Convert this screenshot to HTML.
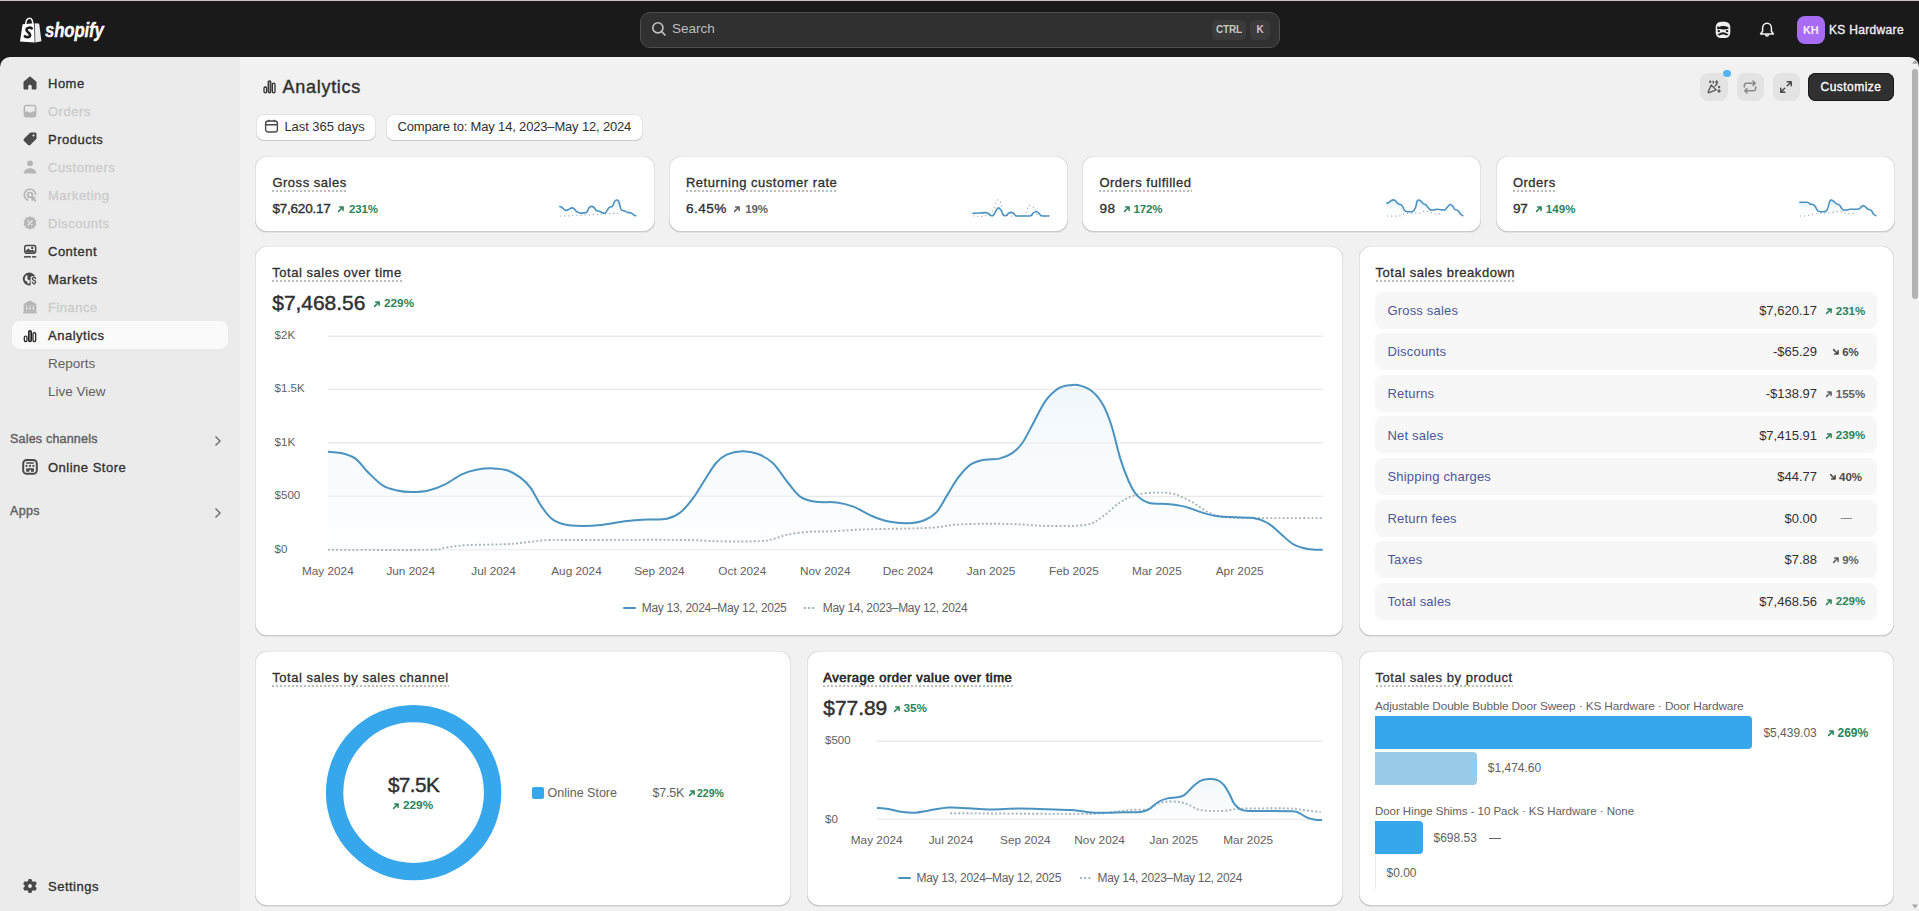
<!DOCTYPE html>
<html><head><meta charset="utf-8">
<style>
*{box-sizing:border-box;margin:0;padding:0}
html,body{width:1919px;height:911px;overflow:hidden;background:#1a1a1a;font-family:"Liberation Sans",sans-serif;color:#303030}
.a{position:absolute}
.t{position:absolute;line-height:1;white-space:nowrap}
.b{font-weight:bold}
#top{left:0;top:0;width:1919px;height:56.6px;background:#1a1a1a;border-top:1px solid #cec3c7}
#side{left:0;top:56.6px;width:240px;height:854.4px;background:#ebebeb;border-top-left-radius:10px}
#main{left:240px;top:56.6px;width:1679px;height:854.4px;background:#f1f1f1;border-top-right-radius:10px}
.card{position:absolute;background:#fff;border-radius:12px;box-shadow:0 1px 0 0 rgba(26,26,26,.07),inset 1px 0 0 rgba(0,0,0,.11),inset -1px 0 0 rgba(0,0,0,.11),inset 0 -1px 0 rgba(0,0,0,.2),inset 0 1px 0 rgba(204,204,204,.4)}
.nav{font-size:13px;font-weight:normal;-webkit-text-stroke:0.32px currentColor;letter-spacing:0.5px;color:#303030}
.sb{font-weight:normal;-webkit-text-stroke:0.32px currentColor;letter-spacing:0.04em}
.dis{color:#cccccc}
.sub{font-size:13.5px;color:#616161}
.ttl{font-size:13px;font-weight:bold;color:#303030;border-bottom:1px dotted #b5b5b5}
.up{color:#29845a;font-weight:bold}
.grey{color:#616161}
</style></head><body>
<div id="top" class="a">
<svg class="a" style="left:18px;top:15px" width="26" height="28" viewBox="0 0 26 28">
<path d="M4.6 8.3 L16.2 7.2 L16.6 26.6 L2 25.6 Z" fill="#fff"/>
<path d="M16.9 7.2 L20.6 7.6 C21 7.7 21.2 8 21.3 8.4 L23.4 25.2 L17.3 26.6 Z" fill="#ececec"/>
<path d="M7.6 8.4 C7.9 5 9.4 2.3 11.6 2.3 C13.4 2.3 14.6 4.3 14.8 7.6" stroke="#fff" stroke-width="1.5" fill="none"/>
<path d="M10.2 6.2 C10.8 5.6 11.6 5.6 12.1 6.1" stroke="#1a1a1a" stroke-width="0.8" fill="none"/>
<path d="M13.6 12.3 C12.6 11.5 9.2 11.2 8.5 13.6 C7.8 16.3 12.6 16.4 12.2 19.4 C11.9 21.4 9 21.6 6.9 20.4" stroke="#1a1a1a" stroke-width="2.7" fill="none" stroke-linecap="round"/>
</svg>
<div class="t" style="left:44.7px;top:18px;font-size:21px;font-weight:bold;font-style:italic;color:#fff;transform:scaleX(0.8);transform-origin:0 0;letter-spacing:-0.2px;-webkit-text-stroke:0.35px #fff">shopify</div>
<div class="a" style="left:640px;top:10.6px;width:640px;height:36.2px;background:#303030;border:1px solid #4d4d4d;border-radius:10px"></div>
<svg class="a" style="left:650px;top:19px" width="18" height="18" viewBox="0 0 18 18"><circle cx="7.9" cy="7.8" r="5.1" stroke="#c4c4c4" stroke-width="1.6" fill="none"/><path d="M11.6 11.5 L15 15" stroke="#c4c4c4" stroke-width="1.7" stroke-linecap="round"/></svg>
<div class="t" style="left:672px;top:21.3px;font-size:13.5px;color:#bdbdbd">Search</div>
<div class="a" style="left:1212px;top:18.5px;width:34px;height:20px;background:#3b3b3b;border-radius:5px"></div>
<div class="t" style="left:1216px;top:23.5px;font-size:10px;font-weight:bold;color:#c8c8c8;letter-spacing:-0.15px">CTRL</div>
<div class="a" style="left:1250px;top:18.5px;width:20px;height:20px;background:#3b3b3b;border-radius:5px"></div>
<div class="t" style="left:1256.5px;top:23.5px;font-size:10px;font-weight:bold;color:#c8c8c8">K</div>
<svg class="a" style="left:1713px;top:19px" width="20" height="20" viewBox="0 0 20 20">
<rect x="2.7" y="1.7" width="14.6" height="16.3" rx="5.2" fill="#f0f0f0"/>
<path d="M4.3 9.2 L4.3 6.9 C4.4 6 5.1 5.7 5.5 6.5 L5.9 7.3 C7 6.2 9 5.8 11 5.9 C13 6 14.8 6.5 15.5 7.6 L15.5 8.8 C14 8.6 12.6 9.7 10.6 9.6 C8.6 9.5 7.1 8.7 5.6 9.3 Z" fill="#1a1a1a"/>
<circle cx="5.8" cy="11.1" r="1.2" fill="#1a1a1a"/><circle cx="14.1" cy="11.1" r="1.2" fill="#1a1a1a"/>
<path d="M4.4 14.6 C6.3 13.7 8 12.3 10 12.3 C12 12.3 13.7 13.7 15.6 14.6 C14.3 15.7 13 15.5 12.3 15 C11.5 14.4 8.5 14.4 7.7 15 C7 15.5 5.7 15.7 4.4 14.6 Z" fill="#1a1a1a"/>
</svg>
<svg class="a" style="left:1757px;top:19px" width="20" height="20" viewBox="0 0 20 20" fill="none" stroke="#f2f2f2" stroke-width="1.5" stroke-linejoin="round">
<path d="M10 3.2 C7.3 3.2 5.6 5.4 5.6 8 L5.6 11.2 L3.6 14 L16.4 14 L14.4 11.2 L14.4 8 C14.4 5.4 12.7 3.2 10 3.2 Z"/>
<path d="M8.6 14.2 C8.6 16.6 11.4 16.6 11.4 14.2"/>
</svg>
<div class="a" style="left:1797px;top:15px;width:28px;height:28px;background:#a86bf3;border-radius:8px"></div>
<div class="t b" style="left:1803px;top:23.5px;font-size:11px;color:#f7ecff;letter-spacing:-0.2px">KH</div>
<div class="t sb" style="left:1829px;top:22.8px;font-size:12px;color:#f3f3f3;letter-spacing:0.32px">KS Hardware</div>
</div>
<div id="side" class="a"></div>
<div id="sidec">
<div class="a" style="left:12px;top:321px;width:216px;height:28px;background:#fafafa;border-radius:8px"></div>
<svg class="a" style="left:20px;top:73px" width="20" height="20" viewBox="0 0 20 20"><path d="M10 3.2 L3.8 8.4 C3.5 8.7 3.5 9 3.5 9.5 L3.5 15.3 C3.5 16.1 4.1 16.5 4.8 16.5 L8.3 16.5 L8.3 13.3 C8.3 12.4 9.1 11.7 10 11.7 C10.9 11.7 11.7 12.4 11.7 13.3 L11.7 16.5 L15.2 16.5 C15.9 16.5 16.5 16.1 16.5 15.3 L16.5 9.5 C16.5 9 16.5 8.7 16.2 8.4 Z" fill="#4a4a4a"/></svg>
<div class="t nav" style="left:48px;top:77.40px">Home</div>
<svg class="a" style="left:20px;top:101px" width="20" height="20" viewBox="0 0 20 20"><rect x="3.6" y="3.7" width="12.8" height="12.8" rx="3" fill="#b5b5b5"/><path d="M5.2 5.3 H14.8 V10.6 H12.3 C11.6 10.6 11.3 11.8 10 11.8 C8.7 11.8 8.4 10.6 7.7 10.6 H5.2 Z" fill="#ebebeb"/></svg>
<div class="t nav dis" style="left:48px;top:105.40px">Orders</div>
<svg class="a" style="left:20px;top:129px" width="20" height="20" viewBox="0 0 20 20"><path d="M11 3.5 L15.2 3.5 C15.9 3.5 16.5 4.1 16.5 4.8 L16.5 9 C16.5 9.5 16.3 9.9 16 10.2 L10.2 16 C9.6 16.6 8.7 16.6 8.1 16 L4 11.9 C3.4 11.3 3.4 10.4 4 9.8 L9.8 4 C10.1 3.7 10.5 3.5 11 3.5 Z" fill="#4a4a4a"/><circle cx="13.5" cy="6.5" r="1.1" fill="#ebebeb"/></svg>
<div class="t nav" style="left:48px;top:133.40px">Products</div>
<svg class="a" style="left:20px;top:157px" width="20" height="20" viewBox="0 0 20 20"><circle cx="10" cy="6.3" r="2.9" fill="#b5b5b5"/><path d="M3.7 16.6 C3.9 13.5 6.5 11.3 10 11.3 C13.5 11.3 16.1 13.5 16.3 16.6 Z" fill="#b5b5b5"/></svg>
<div class="t nav dis" style="left:48px;top:161.40px">Customers</div>
<svg class="a" style="left:20px;top:185px" width="20" height="20" viewBox="0 0 20 20"><path d="M10 3.4 C6.4 3.4 3.5 6.3 3.5 9.9 C3.5 12.8 5.4 15.2 8 16 L8.4 14.3 C6.5 13.6 5.2 11.9 5.2 9.9 C5.2 7.2 7.3 5.1 10 5.1 C12.6 5.1 14.8 7.2 14.8 9.9 L16.5 9.9 C16.5 6.3 13.6 3.4 10 3.4 Z" fill="#b5b5b5"/><circle cx="10" cy="9.9" r="2.4" stroke="#b5b5b5" stroke-width="1.7" fill="none"/><path d="M10.6 10.5 L16.6 12.4 L14.2 13.6 L16.4 15.8 L15.3 16.9 L13.1 14.7 L12 17 Z" fill="#b5b5b5"/></svg>
<div class="t nav dis" style="left:48px;top:189.40px">Marketing</div>
<svg class="a" style="left:20px;top:213px" width="20" height="20" viewBox="0 0 20 20"><path d="M10 3 L11.8 4.4 L14.1 4.2 L14.6 6.4 L16.5 7.6 L15.6 9.8 L16.5 12 L14.6 13.3 L14.1 15.5 L11.8 15.3 L10 16.8 L8.2 15.3 L5.9 15.5 L5.4 13.3 L3.5 12 L4.4 9.8 L3.5 7.6 L5.4 6.4 L5.9 4.2 L8.2 4.4 Z" fill="#b5b5b5"/><path d="M8 12 L12 7.8" stroke="#ebebeb" stroke-width="1.3" stroke-linecap="round"/><circle cx="8.2" cy="8.2" r="0.9" fill="#ebebeb"/><circle cx="11.8" cy="11.6" r="0.9" fill="#ebebeb"/></svg>
<div class="t nav dis" style="left:48px;top:217.40px">Discounts</div>
<svg class="a" style="left:20px;top:241px" width="20" height="20" viewBox="0 0 20 20"><rect x="4" y="3.7" width="12.4" height="9.2" rx="2.4" fill="#4a4a4a"/><rect x="5.5" y="5.2" width="9.4" height="6.2" rx="1.2" fill="#ebebeb"/><path d="M5.5 11.4 L5.5 10 L8.3 7.4 L10.8 9.6 L12.3 8.6 L14.9 10.6 L14.9 11.4 Z" fill="#4a4a4a"/><circle cx="12.2" cy="6.9" r="1.2" fill="#4a4a4a"/><rect x="4" y="15.1" width="6.9" height="1.5" fill="#4a4a4a"/><rect x="12" y="15.1" width="4.2" height="1.5" fill="#4a4a4a"/></svg>
<div class="t nav" style="left:48px;top:245.40px">Content</div>
<svg class="a" style="left:20px;top:269px" width="20" height="20" viewBox="0 0 20 20"><circle cx="9.3" cy="10" r="6.5" fill="#4a4a4a"/><path d="M6.2 6 C7.5 6.5 8 8 7.3 9 C6.8 9.8 8.3 11 9.5 11.2 C10.3 11.3 9.8 13.3 9 14.5 L7.5 15.3 C8 13.8 7.3 12.5 6 12 C4.7 11.5 4.5 9.5 5 8.5 Z" fill="#ebebeb"/><rect x="10.5" y="7" width="7" height="10" rx="2" fill="#ebebeb"/><path d="M15.6 9.6 C15.4 8.8 14.8 8.4 14 8.4 C13 8.4 12.3 9 12.3 9.8 C12.3 11.6 15.8 11 15.8 12.9 C15.8 13.8 15 14.4 14 14.4 C13.1 14.4 12.4 13.9 12.2 13.1 M14 7.6 V8.4 M14 14.4 V15.3" stroke="#4a4a4a" stroke-width="1.3" fill="none" stroke-linecap="round"/></svg>
<div class="t nav" style="left:48px;top:273.40px">Markets</div>
<svg class="a" style="left:20px;top:297px" width="20" height="20" viewBox="0 0 20 20"><path d="M10 3.6 L16.3 7 L16.3 8.3 L3.7 8.3 L3.7 7 Z" fill="#b5b5b5"/><rect x="3.7" y="8.3" width="12.6" height="6.5" fill="#b5b5b5"/><rect x="6" y="9.6" width="1.3" height="3.2" fill="#ebebeb"/><rect x="9.35" y="9.6" width="1.3" height="3.2" fill="#ebebeb"/><rect x="12.7" y="9.6" width="1.3" height="3.2" fill="#ebebeb"/><rect x="3.2" y="14.8" width="13.6" height="1.6" fill="#b5b5b5"/></svg>
<div class="t nav dis" style="left:48px;top:301.40px">Finance</div>
<svg class="a" style="left:20px;top:325px" width="20" height="20" viewBox="0 0 20 20"><rect x="4.3" y="11" width="2.7" height="5.6" rx="1.35" stroke="#1a1a1a" stroke-width="1.2" fill="#fafafa"/><rect x="8.65" y="5.6" width="2.7" height="11" rx="1.35" stroke="#1a1a1a" stroke-width="1.2" fill="#8a8a8a"/><rect x="13" y="7.6" width="2.7" height="9" rx="1.35" stroke="#1a1a1a" stroke-width="1.2" fill="#fafafa"/></svg>
<div class="t nav" style="left:48px;top:329.40px">Analytics</div>
<div class="t sub" style="left:48px;top:356.97px">Reports</div>
<div class="t sub" style="left:48px;top:384.97px">Live View</div>
<div class="t sb" style="left:10px;top:432.72px;font-size:12.5px;color:#616161;letter-spacing:0.2px;-webkit-text-stroke:0.4px #616161">Sales channels</div>
<svg class="a" style="left:211px;top:433px" width="14" height="16" viewBox="0 0 14 16"><path d="M5 4 L9 8 L5 12" stroke="#7a7a7a" stroke-width="1.7" fill="none" stroke-linecap="round" stroke-linejoin="round"/></svg>
<svg class="a" style="left:20px;top:457px" width="20" height="20" viewBox="0 0 20 20"><rect x="3.2" y="3" width="13.6" height="13.8" rx="3.6" stroke="#4a4a4a" stroke-width="2" fill="none"/><rect x="6" y="5.3" width="7.9" height="1.5" rx="0.7" fill="#4a4a4a"/><circle cx="6.5" cy="8.9" r="1.1" fill="#4a4a4a"/><circle cx="10" cy="8.9" r="1.1" fill="#4a4a4a"/><circle cx="13.4" cy="8.9" r="1.1" fill="#4a4a4a"/><path d="M6.2 11.2 H13.9 V14.8 H11 V13 H9.3 V14.8 H6.2 Z" fill="#4a4a4a"/></svg>
<div class="t nav" style="left:48px;top:461.20px">Online Store</div>
<div class="t sb" style="left:10px;top:504.62px;font-size:12.5px;color:#616161;letter-spacing:0.3px;-webkit-text-stroke:0.4px #616161">Apps</div>
<svg class="a" style="left:211px;top:505px" width="14" height="16" viewBox="0 0 14 16"><path d="M5 4 L9 8 L5 12" stroke="#7a7a7a" stroke-width="1.7" fill="none" stroke-linecap="round" stroke-linejoin="round"/></svg>
<svg class="a" style="left:20px;top:876px" width="20" height="20" viewBox="0 0 20 20"><g fill="#4a4a4a"><circle cx="10" cy="10" r="5.4"/><rect x="8.1" y="2.9" width="3.8" height="14.2" rx="1.3"/><rect x="8.1" y="2.9" width="3.8" height="14.2" rx="1.3" transform="rotate(60 10 10)"/><rect x="8.1" y="2.9" width="3.8" height="14.2" rx="1.3" transform="rotate(120 10 10)"/></g><circle cx="10" cy="10" r="1.9" fill="#ebebeb"/></svg>
<div class="t nav" style="left:48px;top:880.00px">Settings</div>
</div>
<div id="main" class="a"></div>
<div id="hdr">
<svg class="a" style="left:261px;top:77px" width="18" height="18" viewBox="0 0 18 18"><rect x="3" y="10" width="2.6" height="5.8" rx="1.3" stroke="#303030" stroke-width="1.3" fill="none"/><rect x="7.2" y="3.8" width="2.6" height="12" rx="1.3" stroke="#303030" stroke-width="1.3" fill="#9a9a9a"/><rect x="11.4" y="6.2" width="2.6" height="9.6" rx="1.3" stroke="#303030" stroke-width="1.3" fill="none"/></svg>
<div class="t sb" style="left:282.5px;top:77.56px;font-size:18px;color:#303030;-webkit-text-stroke:0.4px #303030">Analytics</div>
<div class="a" style="left:256px;top:114px;width:120px;height:27px;background:#fff;border-radius:8px;box-shadow:inset 0 -1px 0 #c9c9c9,inset 0 0 0 1px #e4e4e4"></div>
<svg class="a" style="left:263px;top:118px" width="17" height="17" viewBox="0 0 17 17"><rect x="2.6" y="3" width="11.8" height="11" rx="2.6" stroke="#4a4a4a" stroke-width="1.4" fill="none"/><path d="M2.8 6.8 H14.2 M5.8 1.8 V3.8 M11.2 1.8 V3.8" stroke="#4a4a4a" stroke-width="1.4"/></svg>
<div class="t " style="left:284.4px;top:120.00px;font-size:13px;color:#303030;letter-spacing:-0.05px">Last 365 days</div>
<div class="a" style="left:385.5px;top:114px;width:257px;height:27px;background:#fff;border-radius:8px;box-shadow:inset 0 -1px 0 #c9c9c9,inset 0 0 0 1px #e4e4e4"></div>
<div class="t " style="left:397.5px;top:120.00px;font-size:13px;color:#303030;letter-spacing:-0.17px">Compare to: May 14, 2023–May 12, 2024</div>
<div class="a" style="left:1700px;top:73px;width:28px;height:28px;background:#e3e3e3;border-radius:8px"></div>
<div class="a" style="left:1736.5px;top:73px;width:27px;height:28px;background:#e3e3e3;border-radius:8px"></div>
<div class="a" style="left:1772.5px;top:73px;width:27px;height:28px;background:#e3e3e3;border-radius:8px"></div>
<div class="a" style="left:1723.2px;top:69.8px;width:7.5px;height:7.5px;border-radius:50%;background:#51b4f5;box-shadow:0 0 0 1px #f1f1f1"></div>
<svg class="a" style="left:1704px;top:77px" width="20" height="20" viewBox="0 0 20 20" fill="none" stroke="#5c5c5c" stroke-width="1.4" stroke-linecap="round" stroke-linejoin="round">
<path d="M7.2 8 L12 12.8 L5.3 15.6 C4.6 15.9 4 15.3 4.3 14.6 Z"/><circle cx="6.2" cy="4.8" r="0.5" fill="#5c5c5c"/><path d="M9 4.2 L9.4 6"/><path d="M12.6 3.8 V6.4 M11.3 5.1 H13.9"/><path d="M11 9 L13 7"/><circle cx="15.1" cy="10" r="0.5" fill="#5c5c5c"/><path d="M15 12.8 V15.2 M13.8 14 H16.2"/></svg>
<svg class="a" style="left:1740px;top:77px" width="20" height="20" viewBox="0 0 20 20" fill="none" stroke="#8a8a8a" stroke-width="1.5" stroke-linecap="round" stroke-linejoin="round">
<path d="M4.3 10 V8.5 C4.3 7.2 5.3 6.2 6.6 6.2 H15.2 M13 4 L15.3 6.2 L13 8.4"/><path d="M15.7 10 V11.5 C15.7 12.8 14.7 13.8 13.4 13.8 H4.8 M7 11.6 L4.7 13.8 L7 16"/></svg>
<svg class="a" style="left:1776px;top:77px" width="20" height="20" viewBox="0 0 20 20" fill="none" stroke="#4a4a4a" stroke-width="1.5" stroke-linecap="round" stroke-linejoin="round">
<path d="M4.8 15.2 L8.7 11.3 M11.3 8.7 L15.2 4.8 M11.2 4.8 H15.2 V8.8 M4.8 11.2 V15.2 H8.8"/></svg>
<div class="a" style="left:1808px;top:73px;width:86px;height:28px;background:#303030;border-radius:8px;box-shadow:inset 0 0 0 1px #1a1a1a,inset 0 1px 0 #4a4a4a"></div>
<div class="t sb" style="left:1820.5px;top:80.84px;font-size:12px;color:#fff">Customize</div>
</div>
<div id="sb">
<svg class="a" style="left:1911px;top:59px" width="8" height="6"><path d="M1.1 4.8 L4 1 L6.9 4.8 Z" fill="#a3a3a3"/></svg>
<div class="a" style="left:1912px;top:69px;width:6px;height:230px;background:#b3b3b3;border-radius:3px"></div>
<svg class="a" style="left:1911px;top:904px" width="8" height="6"><path d="M1.1 0.6 L4 4.6 L6.9 0.6 Z" fill="#a3a3a3"/></svg>
</div>
<!--C-->
<div class="card" style="left:255.4px;top:156px;width:399.2px;height:75.5px"></div>
<div class="t sb" style="left:272.40px;top:176.20px;font-size:13px;color:#303030">Gross sales</div>
<div class="a" style="left:272.4px;top:190px;width:74.8px;height:2px;background:linear-gradient(90deg,#bdbdbd 2px,transparent 2px) 0 0/4px 2px repeat-x"></div>
<div class="t " style="left:272.40px;top:201.99px;font-size:13.6px;color:#303030;letter-spacing:-0.25px;-webkit-text-stroke:0.35px #303030">$7,620.17</div>
<svg class="a" style="left:336.10px;top:204.30px" width="10" height="10" viewBox="0 0 10 10"><path d="M2.6 7.4 L7 3 M3.6 2.9 H7.1 V6.4" stroke="#29845a" stroke-width="1.5" fill="none" stroke-linecap="round" stroke-linejoin="round"/></svg>
<div class="t b" style="left:349.00px;top:203.77px;font-size:11.5px;color:#29845a;letter-spacing:-0.13px">231%</div>
<svg class="a" style="left:0;top:0;overflow:visible" width="1" height="1"><defs><linearGradient id="sg1" x1="0" y1="0" x2="0" y2="1"><stop offset="0" stop-color="#cfe8f7"/><stop offset="1" stop-color="#fff" stop-opacity="0"/></linearGradient></defs><path d="M559.26 206.34 C559.67 206.49 560.86 206.68 561.72 207.24 C562.58 207.80 563.59 209.18 564.41 209.71 C565.23 210.23 565.91 210.45 566.65 210.38 C567.40 210.30 568.00 209.67 568.90 209.26 C569.79 208.85 571.14 207.99 572.03 207.91 C572.93 207.84 573.45 208.14 574.27 208.81 C575.10 209.48 575.99 211.24 576.96 211.95 C577.93 212.66 578.98 212.92 580.10 213.07 C581.22 213.22 582.57 212.99 583.69 212.84 C584.81 212.69 585.93 213.03 586.82 212.17 C587.72 211.31 588.28 208.66 589.07 207.69 C589.85 206.72 590.71 206.38 591.53 206.34 C592.35 206.31 593.21 206.79 594.00 207.46 C594.78 208.14 595.34 209.74 596.24 210.38 C597.13 211.01 598.40 210.90 599.37 211.27 C600.35 211.65 601.24 212.28 602.06 212.62 C602.89 212.95 603.63 213.37 604.31 213.29 C604.98 213.22 605.35 213.07 606.10 212.17 C606.85 211.27 607.97 208.81 608.79 207.91 C609.61 207.02 610.36 207.13 611.03 206.79 C611.70 206.46 612.22 206.79 612.82 205.90 C613.42 205.00 613.94 202.38 614.61 201.41 C615.29 200.44 616.18 200.11 616.86 200.07 C617.53 200.03 617.98 199.69 618.65 201.19 C619.32 202.68 620.29 207.50 620.89 209.03 C621.49 210.56 621.56 210.04 622.23 210.38 C622.91 210.71 624.03 210.71 624.92 211.05 C625.82 211.39 626.57 212.06 627.61 212.39 C628.66 212.73 630.15 212.62 631.20 213.07 C632.24 213.52 633.03 214.60 633.89 215.08 C634.75 215.57 635.94 215.83 636.35 215.98 L636.35 216 L559.26 216 Z" fill="url(#sg1)" opacity="0.8"/><path d="M559.93 215.98 C561.28 215.98 565.98 216.05 568.00 215.98 C570.02 215.91 569.94 215.68 572.03 215.53 C574.12 215.38 577.78 215.20 580.55 215.08 C583.31 214.97 585.93 214.97 588.62 214.86 C591.31 214.75 594.07 214.56 596.69 214.41 C599.30 214.26 601.54 214.15 604.31 213.96 C607.07 213.78 611.10 213.40 613.27 213.29 C615.44 213.18 615.96 213.10 617.30 213.29 C618.65 213.48 620.67 214.22 621.34 214.41" stroke="#a3adb3" stroke-width="1.2" fill="none" stroke-dasharray="1.2 2.9"/><path d="M559.26 206.34 C559.67 206.49 560.86 206.68 561.72 207.24 C562.58 207.80 563.59 209.18 564.41 209.71 C565.23 210.23 565.91 210.45 566.65 210.38 C567.40 210.30 568.00 209.67 568.90 209.26 C569.79 208.85 571.14 207.99 572.03 207.91 C572.93 207.84 573.45 208.14 574.27 208.81 C575.10 209.48 575.99 211.24 576.96 211.95 C577.93 212.66 578.98 212.92 580.10 213.07 C581.22 213.22 582.57 212.99 583.69 212.84 C584.81 212.69 585.93 213.03 586.82 212.17 C587.72 211.31 588.28 208.66 589.07 207.69 C589.85 206.72 590.71 206.38 591.53 206.34 C592.35 206.31 593.21 206.79 594.00 207.46 C594.78 208.14 595.34 209.74 596.24 210.38 C597.13 211.01 598.40 210.90 599.37 211.27 C600.35 211.65 601.24 212.28 602.06 212.62 C602.89 212.95 603.63 213.37 604.31 213.29 C604.98 213.22 605.35 213.07 606.10 212.17 C606.85 211.27 607.97 208.81 608.79 207.91 C609.61 207.02 610.36 207.13 611.03 206.79 C611.70 206.46 612.22 206.79 612.82 205.90 C613.42 205.00 613.94 202.38 614.61 201.41 C615.29 200.44 616.18 200.11 616.86 200.07 C617.53 200.03 617.98 199.69 618.65 201.19 C619.32 202.68 620.29 207.50 620.89 209.03 C621.49 210.56 621.56 210.04 622.23 210.38 C622.91 210.71 624.03 210.71 624.92 211.05 C625.82 211.39 626.57 212.06 627.61 212.39 C628.66 212.73 630.15 212.62 631.20 213.07 C632.24 213.52 633.03 214.60 633.89 215.08 C634.75 215.57 635.94 215.83 636.35 215.98" stroke="#4a93c0" stroke-width="1.6" fill="none"/></svg>
<div class="card" style="left:668.5px;top:156px;width:399.1px;height:75.5px"></div>
<div class="t sb" style="left:685.90px;top:176.20px;font-size:13px;color:#303030">Returning customer rate</div>
<div class="a" style="left:685.9px;top:190px;width:151.9px;height:2px;background:linear-gradient(90deg,#bdbdbd 2px,transparent 2px) 0 0/4px 2px repeat-x"></div>
<div class="t " style="left:685.90px;top:201.99px;font-size:13.6px;color:#303030;letter-spacing:0.50px;-webkit-text-stroke:0.35px #303030">6.45%</div>
<svg class="a" style="left:732.30px;top:204.30px" width="10" height="10" viewBox="0 0 10 10"><path d="M2.6 7.4 L7 3 M3.6 2.9 H7.1 V6.4" stroke="#616161" stroke-width="1.5" fill="none" stroke-linecap="round" stroke-linejoin="round"/></svg>
<div class="t b" style="left:745.30px;top:203.77px;font-size:11.5px;color:#616161;letter-spacing:-0.15px">19%</div>
<svg class="a" style="left:0;top:0;overflow:visible" width="1" height="1"><defs><linearGradient id="sg2" x1="0" y1="0" x2="0" y2="1"><stop offset="0" stop-color="#cfe8f7"/><stop offset="1" stop-color="#fff" stop-opacity="0"/></linearGradient></defs><path d="M972.26 213.29 C973.42 213.25 976.93 213.18 979.21 213.07 C981.48 212.95 984.44 212.54 985.93 212.62 C987.42 212.69 987.35 213.03 988.17 213.52 C988.99 214.00 989.96 215.27 990.86 215.53 C991.76 215.79 992.73 215.87 993.55 215.08 C994.37 214.30 994.97 212.02 995.79 210.83 C996.61 209.63 997.58 207.99 998.48 207.91 C999.38 207.84 1000.35 209.14 1001.17 210.38 C1001.99 211.61 1002.59 214.45 1003.41 215.31 C1004.23 216.17 1005.28 215.83 1006.10 215.53 C1006.92 215.23 1007.52 214.04 1008.34 213.52 C1009.16 212.99 1010.13 212.39 1011.03 212.39 C1011.93 212.39 1012.90 212.95 1013.72 213.52 C1014.54 214.08 1014.62 215.35 1015.96 215.76 C1017.31 216.17 1019.32 215.98 1021.79 215.98 C1024.25 215.98 1028.88 216.24 1030.75 215.76 C1032.62 215.27 1032.10 213.74 1032.99 213.07 C1033.89 212.39 1035.16 211.72 1036.13 211.72 C1037.10 211.72 1037.92 212.39 1038.82 213.07 C1039.72 213.74 1039.75 215.27 1041.51 215.76 C1043.27 216.24 1048.05 215.94 1049.35 215.98 L1049.35 216 L972.26 216 Z" fill="url(#sg2)" opacity="0.8"/><path d="M972.93 215.98 C974.95 215.98 981.67 216.99 985.03 215.98 C988.39 214.97 991.23 212.10 993.10 209.93 C994.97 207.76 995.34 204.70 996.24 202.98 C997.13 201.26 997.73 199.62 998.48 199.62 C999.23 199.62 999.90 200.67 1000.72 202.98 C1001.54 205.30 1001.69 211.35 1003.41 213.52 C1005.13 215.68 1007.59 215.68 1011.03 215.98 C1014.47 216.28 1021.34 216.47 1024.03 215.31 C1026.72 214.15 1026.38 210.68 1027.17 209.03 C1027.95 207.39 1027.91 205.78 1028.74 205.45 C1029.56 205.11 1031.01 206.49 1032.10 207.02 C1033.18 207.54 1034.26 207.20 1035.23 208.58 C1036.21 209.97 1035.57 214.08 1037.92 215.31 C1040.28 216.54 1047.45 215.87 1049.35 215.98" stroke="#a3adb3" stroke-width="1.2" fill="none" stroke-dasharray="1.2 2.9"/><path d="M972.26 213.29 C973.42 213.25 976.93 213.18 979.21 213.07 C981.48 212.95 984.44 212.54 985.93 212.62 C987.42 212.69 987.35 213.03 988.17 213.52 C988.99 214.00 989.96 215.27 990.86 215.53 C991.76 215.79 992.73 215.87 993.55 215.08 C994.37 214.30 994.97 212.02 995.79 210.83 C996.61 209.63 997.58 207.99 998.48 207.91 C999.38 207.84 1000.35 209.14 1001.17 210.38 C1001.99 211.61 1002.59 214.45 1003.41 215.31 C1004.23 216.17 1005.28 215.83 1006.10 215.53 C1006.92 215.23 1007.52 214.04 1008.34 213.52 C1009.16 212.99 1010.13 212.39 1011.03 212.39 C1011.93 212.39 1012.90 212.95 1013.72 213.52 C1014.54 214.08 1014.62 215.35 1015.96 215.76 C1017.31 216.17 1019.32 215.98 1021.79 215.98 C1024.25 215.98 1028.88 216.24 1030.75 215.76 C1032.62 215.27 1032.10 213.74 1032.99 213.07 C1033.89 212.39 1035.16 211.72 1036.13 211.72 C1037.10 211.72 1037.92 212.39 1038.82 213.07 C1039.72 213.74 1039.75 215.27 1041.51 215.76 C1043.27 216.24 1048.05 215.94 1049.35 215.98" stroke="#4a93c0" stroke-width="1.6" fill="none"/></svg>
<div class="card" style="left:1082.2px;top:156px;width:399.3px;height:75.5px"></div>
<div class="t sb" style="left:1099.40px;top:176.20px;font-size:13px;color:#303030">Orders fulfilled</div>
<div class="a" style="left:1099.4px;top:190px;width:92.6px;height:2px;background:linear-gradient(90deg,#bdbdbd 2px,transparent 2px) 0 0/4px 2px repeat-x"></div>
<div class="t " style="left:1099.40px;top:201.99px;font-size:13.6px;color:#303030;letter-spacing:0.50px;-webkit-text-stroke:0.35px #303030">98</div>
<svg class="a" style="left:1121.60px;top:204.30px" width="10" height="10" viewBox="0 0 10 10"><path d="M2.6 7.4 L7 3 M3.6 2.9 H7.1 V6.4" stroke="#29845a" stroke-width="1.5" fill="none" stroke-linecap="round" stroke-linejoin="round"/></svg>
<div class="t b" style="left:1133.60px;top:203.77px;font-size:11.5px;color:#29845a;letter-spacing:-0.15px">172%</div>
<svg class="a" style="left:0;top:0;overflow:visible" width="1" height="1"><defs><linearGradient id="sg3" x1="0" y1="0" x2="0" y2="1"><stop offset="0" stop-color="#cfe8f7"/><stop offset="1" stop-color="#fff" stop-opacity="0"/></linearGradient></defs><path d="M1386.26 203.43 C1386.67 203.28 1387.94 202.98 1388.72 202.53 C1389.51 202.09 1390.18 201.19 1390.96 200.74 C1391.75 200.29 1392.68 199.84 1393.43 199.84 C1394.18 199.84 1394.74 200.14 1395.45 200.74 C1396.16 201.34 1396.87 202.79 1397.69 203.43 C1398.51 204.06 1399.63 204.14 1400.38 204.55 C1401.12 204.96 1401.50 204.96 1402.17 205.90 C1402.84 206.83 1403.74 209.22 1404.41 210.15 C1405.08 211.09 1405.16 211.24 1406.20 211.50 C1407.25 211.76 1409.49 211.80 1410.69 211.72 C1411.88 211.65 1412.55 211.80 1413.38 211.05 C1414.20 210.30 1415.02 208.85 1415.62 207.24 C1416.21 205.63 1416.48 202.61 1416.96 201.41 C1417.45 200.22 1417.86 200.11 1418.53 200.07 C1419.20 200.03 1420.21 200.59 1421.00 201.19 C1421.78 201.79 1422.42 203.06 1423.24 203.65 C1424.06 204.25 1425.10 204.10 1425.93 204.77 C1426.75 205.45 1427.42 206.83 1428.17 207.69 C1428.91 208.55 1429.51 209.56 1430.41 209.93 C1431.31 210.30 1432.43 210.04 1433.55 209.93 C1434.67 209.82 1435.86 209.29 1437.13 209.26 C1438.40 209.22 1439.90 209.59 1441.17 209.71 C1442.44 209.82 1443.78 210.27 1444.75 209.93 C1445.72 209.59 1446.10 208.58 1446.99 207.69 C1447.89 206.79 1449.16 204.81 1450.13 204.55 C1451.10 204.29 1452.07 205.33 1452.82 206.12 C1453.57 206.90 1453.72 208.47 1454.61 209.26 C1455.51 210.04 1457.23 210.04 1458.20 210.83 C1459.17 211.61 1459.58 213.10 1460.44 213.96 C1461.30 214.82 1462.87 215.64 1463.35 215.98 L1463.35 216 L1386.26 216 Z" fill="url(#sg3)" opacity="0.8"/><path d="M1386.93 215.98 C1388.95 215.98 1396.42 216.20 1399.03 215.98 C1401.65 215.76 1401.27 215.05 1402.62 214.64 C1403.96 214.22 1405.01 213.78 1407.10 213.52 C1409.19 213.25 1413.15 213.07 1415.17 213.07 C1417.19 213.07 1418.01 213.74 1419.20 213.52 C1420.40 213.29 1421.07 212.10 1422.34 211.72 C1423.61 211.35 1424.88 210.98 1426.82 211.27 C1428.77 211.57 1432.13 212.99 1433.99 213.52 C1435.86 214.04 1436.83 214.60 1438.03 214.41 C1439.22 214.22 1440.64 212.73 1441.17 212.39" stroke="#a3adb3" stroke-width="1.2" fill="none" stroke-dasharray="1.2 2.9"/><path d="M1386.26 203.43 C1386.67 203.28 1387.94 202.98 1388.72 202.53 C1389.51 202.09 1390.18 201.19 1390.96 200.74 C1391.75 200.29 1392.68 199.84 1393.43 199.84 C1394.18 199.84 1394.74 200.14 1395.45 200.74 C1396.16 201.34 1396.87 202.79 1397.69 203.43 C1398.51 204.06 1399.63 204.14 1400.38 204.55 C1401.12 204.96 1401.50 204.96 1402.17 205.90 C1402.84 206.83 1403.74 209.22 1404.41 210.15 C1405.08 211.09 1405.16 211.24 1406.20 211.50 C1407.25 211.76 1409.49 211.80 1410.69 211.72 C1411.88 211.65 1412.55 211.80 1413.38 211.05 C1414.20 210.30 1415.02 208.85 1415.62 207.24 C1416.21 205.63 1416.48 202.61 1416.96 201.41 C1417.45 200.22 1417.86 200.11 1418.53 200.07 C1419.20 200.03 1420.21 200.59 1421.00 201.19 C1421.78 201.79 1422.42 203.06 1423.24 203.65 C1424.06 204.25 1425.10 204.10 1425.93 204.77 C1426.75 205.45 1427.42 206.83 1428.17 207.69 C1428.91 208.55 1429.51 209.56 1430.41 209.93 C1431.31 210.30 1432.43 210.04 1433.55 209.93 C1434.67 209.82 1435.86 209.29 1437.13 209.26 C1438.40 209.22 1439.90 209.59 1441.17 209.71 C1442.44 209.82 1443.78 210.27 1444.75 209.93 C1445.72 209.59 1446.10 208.58 1446.99 207.69 C1447.89 206.79 1449.16 204.81 1450.13 204.55 C1451.10 204.29 1452.07 205.33 1452.82 206.12 C1453.57 206.90 1453.72 208.47 1454.61 209.26 C1455.51 210.04 1457.23 210.04 1458.20 210.83 C1459.17 211.61 1459.58 213.10 1460.44 213.96 C1461.30 214.82 1462.87 215.64 1463.35 215.98" stroke="#4a93c0" stroke-width="1.6" fill="none"/></svg>
<div class="card" style="left:1495.5px;top:156px;width:399px;height:75.5px"></div>
<div class="t sb" style="left:1512.90px;top:176.20px;font-size:13px;color:#303030">Orders</div>
<div class="a" style="left:1512.9px;top:190px;width:43.3px;height:2px;background:linear-gradient(90deg,#bdbdbd 2px,transparent 2px) 0 0/4px 2px repeat-x"></div>
<div class="t " style="left:1512.90px;top:201.99px;font-size:13.6px;color:#303030;letter-spacing:-0.22px;-webkit-text-stroke:0.35px #303030">97</div>
<svg class="a" style="left:1533.80px;top:204.30px" width="10" height="10" viewBox="0 0 10 10"><path d="M2.6 7.4 L7 3 M3.6 2.9 H7.1 V6.4" stroke="#29845a" stroke-width="1.5" fill="none" stroke-linecap="round" stroke-linejoin="round"/></svg>
<div class="t b" style="left:1545.80px;top:203.77px;font-size:11.5px;color:#29845a;letter-spacing:0.07px">149%</div>
<svg class="a" style="left:0;top:0;overflow:visible" width="1" height="1"><defs><linearGradient id="sg4" x1="0" y1="0" x2="0" y2="1"><stop offset="0" stop-color="#cfe8f7"/><stop offset="1" stop-color="#fff" stop-opacity="0"/></linearGradient></defs><path d="M1799.26 202.31 C1800.57 202.31 1805.27 202.05 1807.10 202.31 C1808.93 202.57 1809.19 203.47 1810.24 203.88 C1811.29 204.29 1812.56 204.36 1813.38 204.77 C1814.20 205.19 1814.50 205.41 1815.17 206.34 C1815.84 207.28 1816.74 209.52 1817.41 210.38 C1818.08 211.24 1817.78 211.35 1819.20 211.50 C1820.62 211.65 1824.43 212.06 1825.93 211.27 C1827.42 210.49 1827.50 208.51 1828.17 206.79 C1828.84 205.07 1829.36 202.09 1829.96 200.96 C1830.56 199.84 1831.08 199.96 1831.75 200.07 C1832.43 200.18 1833.25 201.04 1834.00 201.64 C1834.74 202.23 1835.34 203.09 1836.24 203.65 C1837.13 204.21 1838.48 204.25 1839.37 205.00 C1840.27 205.75 1840.94 207.28 1841.62 208.14 C1842.29 209.00 1842.59 209.85 1843.41 210.15 C1844.23 210.45 1845.43 210.08 1846.55 209.93 C1847.67 209.78 1848.12 209.41 1850.13 209.26 C1852.15 209.11 1856.86 209.37 1858.65 209.03 C1860.44 208.70 1860.14 207.80 1860.89 207.24 C1861.64 206.68 1862.31 205.71 1863.13 205.67 C1863.95 205.63 1865.07 206.46 1865.82 207.02 C1866.57 207.58 1866.72 208.47 1867.61 209.03 C1868.51 209.59 1870.23 209.56 1871.20 210.38 C1872.17 211.20 1872.58 213.03 1873.44 213.96 C1874.30 214.90 1875.87 215.64 1876.35 215.98 L1876.35 216 L1799.26 216 Z" fill="url(#sg4)" opacity="0.8"/><path d="M1799.93 215.98 C1800.60 215.98 1802.62 216.05 1803.96 215.98 C1805.31 215.91 1806.65 215.76 1808.00 215.53 C1809.34 215.31 1809.94 215.01 1812.03 214.64 C1814.12 214.26 1817.86 213.55 1820.55 213.29 C1823.24 213.03 1825.55 213.33 1828.17 213.07 C1830.78 212.81 1834.22 212.02 1836.24 211.72 C1838.25 211.42 1838.93 211.09 1840.27 211.27 C1841.62 211.46 1842.29 212.47 1844.31 212.84 C1846.32 213.22 1850.51 213.70 1852.37 213.52 C1854.24 213.33 1854.99 212.02 1855.51 211.72" stroke="#a3adb3" stroke-width="1.2" fill="none" stroke-dasharray="1.2 2.9"/><path d="M1799.26 202.31 C1800.57 202.31 1805.27 202.05 1807.10 202.31 C1808.93 202.57 1809.19 203.47 1810.24 203.88 C1811.29 204.29 1812.56 204.36 1813.38 204.77 C1814.20 205.19 1814.50 205.41 1815.17 206.34 C1815.84 207.28 1816.74 209.52 1817.41 210.38 C1818.08 211.24 1817.78 211.35 1819.20 211.50 C1820.62 211.65 1824.43 212.06 1825.93 211.27 C1827.42 210.49 1827.50 208.51 1828.17 206.79 C1828.84 205.07 1829.36 202.09 1829.96 200.96 C1830.56 199.84 1831.08 199.96 1831.75 200.07 C1832.43 200.18 1833.25 201.04 1834.00 201.64 C1834.74 202.23 1835.34 203.09 1836.24 203.65 C1837.13 204.21 1838.48 204.25 1839.37 205.00 C1840.27 205.75 1840.94 207.28 1841.62 208.14 C1842.29 209.00 1842.59 209.85 1843.41 210.15 C1844.23 210.45 1845.43 210.08 1846.55 209.93 C1847.67 209.78 1848.12 209.41 1850.13 209.26 C1852.15 209.11 1856.86 209.37 1858.65 209.03 C1860.44 208.70 1860.14 207.80 1860.89 207.24 C1861.64 206.68 1862.31 205.71 1863.13 205.67 C1863.95 205.63 1865.07 206.46 1865.82 207.02 C1866.57 207.58 1866.72 208.47 1867.61 209.03 C1868.51 209.59 1870.23 209.56 1871.20 210.38 C1872.17 211.20 1872.58 213.03 1873.44 213.96 C1874.30 214.90 1875.87 215.64 1876.35 215.98" stroke="#4a93c0" stroke-width="1.6" fill="none"/></svg>
<div class="card" style="left:255.4px;top:246.1px;width:1088px;height:390.3px"></div>
<div class="t sb" style="left:272.30px;top:265.70px;font-size:13px;color:#303030">Total sales over time</div>
<div class="a" style="left:272.3px;top:280px;width:129.9px;height:2px;background:linear-gradient(90deg,#bdbdbd 2px,transparent 2px) 0 0/4px 2px repeat-x"></div>
<div class="t " style="left:272.30px;top:292.02px;font-size:21px;color:#303030;letter-spacing:-0.05px;-webkit-text-stroke:0.45px #303030">$7,468.56</div>
<svg class="a" style="left:372.00px;top:299.00px" width="10" height="10" viewBox="0 0 10 10"><path d="M2.6 7.4 L7 3 M3.6 2.9 H7.1 V6.4" stroke="#29845a" stroke-width="1.5" fill="none" stroke-linecap="round" stroke-linejoin="round"/></svg>
<div class="t b" style="left:384.00px;top:297.91px;font-size:11.8px;color:#29845a">229%</div>
<div class="a" style="left:328px;top:335.5px;width:995px;height:1px;background:#ebebeb"></div>
<div class="t " style="left:274.60px;top:330.17px;font-size:11.5px;color:#616161;letter-spacing:0px">$2K</div>
<div class="a" style="left:328px;top:388.7px;width:995px;height:1px;background:#ebebeb"></div>
<div class="t " style="left:274.60px;top:383.37px;font-size:11.5px;color:#616161;letter-spacing:0px">$1.5K</div>
<div class="a" style="left:328px;top:442.4px;width:995px;height:1px;background:#ebebeb"></div>
<div class="t " style="left:274.60px;top:437.07px;font-size:11.5px;color:#616161;letter-spacing:0px">$1K</div>
<div class="a" style="left:328px;top:495.7px;width:995px;height:1px;background:#ebebeb"></div>
<div class="t " style="left:274.60px;top:490.37px;font-size:11.5px;color:#616161;letter-spacing:0px">$500</div>
<div class="a" style="left:328px;top:549.3px;width:995px;height:1px;background:#ebebeb"></div>
<div class="t " style="left:274.60px;top:543.97px;font-size:11.5px;color:#616161;letter-spacing:0px">$0</div>
<div class="t" style="left:287.8px;width:80px;text-align:center;top:566.01px;font-size:11.8px;color:#616161">May 2024</div>
<div class="t" style="left:370.7px;width:80px;text-align:center;top:566.01px;font-size:11.8px;color:#616161">Jun 2024</div>
<div class="t" style="left:453.6px;width:80px;text-align:center;top:566.01px;font-size:11.8px;color:#616161">Jul 2024</div>
<div class="t" style="left:536.5px;width:80px;text-align:center;top:566.01px;font-size:11.8px;color:#616161">Aug 2024</div>
<div class="t" style="left:619.4px;width:80px;text-align:center;top:566.01px;font-size:11.8px;color:#616161">Sep 2024</div>
<div class="t" style="left:702.3px;width:80px;text-align:center;top:566.01px;font-size:11.8px;color:#616161">Oct 2024</div>
<div class="t" style="left:785.2px;width:80px;text-align:center;top:566.01px;font-size:11.8px;color:#616161">Nov 2024</div>
<div class="t" style="left:868.1px;width:80px;text-align:center;top:566.01px;font-size:11.8px;color:#616161">Dec 2024</div>
<div class="t" style="left:951.0px;width:80px;text-align:center;top:566.01px;font-size:11.8px;color:#616161">Jan 2025</div>
<div class="t" style="left:1033.9px;width:80px;text-align:center;top:566.01px;font-size:11.8px;color:#616161">Feb 2025</div>
<div class="t" style="left:1116.8px;width:80px;text-align:center;top:566.01px;font-size:11.8px;color:#616161">Mar 2025</div>
<div class="t" style="left:1199.7px;width:80px;text-align:center;top:566.01px;font-size:11.8px;color:#616161">Apr 2025</div>
<svg class="a" style="left:0;top:0;overflow:visible" width="1" height="1"><defs><linearGradient id="mg" x1="0" y1="385" x2="0" y2="550" gradientUnits="userSpaceOnUse"><stop offset="0" stop-color="#f1f8fc"/><stop offset="1" stop-color="#fdfeff"/></linearGradient></defs><path d="M327.90 451.80 C330.07 452.00 336.32 451.87 340.90 453.00 C345.48 454.13 350.88 455.40 355.40 458.60 C359.92 461.80 363.47 467.75 368.00 472.20 C372.53 476.65 377.75 482.25 382.60 485.30 C387.45 488.35 392.25 489.38 397.10 490.50 C401.95 491.62 406.48 492.00 411.70 492.00 C416.92 492.00 422.83 491.78 428.40 490.50 C433.97 489.22 439.53 487.00 445.10 484.30 C450.67 481.60 456.58 476.73 461.80 474.30 C467.02 471.87 471.18 470.68 476.40 469.70 C481.62 468.72 487.88 468.27 493.10 468.40 C498.32 468.53 503.18 469.00 507.70 470.50 C512.22 472.00 516.38 474.52 520.20 477.40 C524.02 480.28 527.13 483.10 530.60 487.80 C534.07 492.50 537.53 500.48 541.00 505.60 C544.47 510.72 547.57 515.38 551.40 518.50 C555.23 521.62 558.85 523.05 564.00 524.30 C569.15 525.55 576.18 525.88 582.30 526.00 C588.42 526.12 593.27 525.82 600.70 525.00 C608.13 524.18 619.22 522.00 626.90 521.10 C634.58 520.20 640.15 520.00 646.80 519.60 C653.45 519.20 661.17 519.93 666.80 518.70 C672.43 517.47 676.25 515.58 680.60 512.20 C684.95 508.82 688.80 503.90 692.90 498.40 C697.00 492.90 701.35 485.10 705.20 479.20 C709.05 473.30 712.42 467.10 716.00 463.00 C719.58 458.90 722.35 456.57 726.70 454.60 C731.05 452.63 736.97 451.33 742.10 451.20 C747.23 451.07 752.38 451.83 757.50 453.80 C762.62 455.77 767.68 458.13 772.80 463.00 C777.92 467.87 783.58 477.37 788.20 483.00 C792.82 488.63 795.88 493.67 800.50 496.80 C805.12 499.93 809.87 500.87 815.90 501.80 C821.93 502.73 830.45 501.60 836.70 502.40 C842.95 503.20 847.50 504.33 853.40 506.60 C859.30 508.87 866.20 513.50 872.10 516.00 C878.00 518.50 882.88 520.38 888.80 521.60 C894.72 522.82 901.68 523.53 907.60 523.30 C913.52 523.07 919.43 522.12 924.30 520.20 C929.17 518.28 932.98 515.98 936.80 511.80 C940.62 507.62 943.73 500.67 947.20 495.10 C950.67 489.53 953.78 483.43 957.60 478.40 C961.42 473.37 965.58 468.02 970.10 464.90 C974.62 461.78 979.83 460.75 984.70 459.70 C989.57 458.65 994.78 459.65 999.30 458.60 C1003.82 457.55 1007.97 456.00 1011.80 453.40 C1015.63 450.80 1018.82 447.87 1022.30 443.00 C1025.78 438.13 1028.88 431.15 1032.70 424.20 C1036.52 417.25 1041.03 407.20 1045.20 401.30 C1049.37 395.40 1053.53 391.48 1057.70 388.80 C1061.87 386.12 1066.42 385.73 1070.20 385.20 C1073.98 384.67 1076.62 384.48 1080.40 385.60 C1084.18 386.72 1089.07 388.58 1092.90 391.90 C1096.73 395.22 1100.27 399.77 1103.40 405.50 C1106.53 411.23 1108.93 417.62 1111.70 426.30 C1114.47 434.98 1117.22 448.57 1120.00 457.60 C1122.78 466.63 1125.62 474.25 1128.40 480.50 C1131.18 486.75 1133.23 491.35 1136.70 495.10 C1140.17 498.85 1144.33 501.53 1149.20 503.00 C1154.07 504.47 1159.98 503.30 1165.90 503.90 C1171.82 504.50 1178.45 505.10 1184.70 506.60 C1190.95 508.10 1197.50 511.23 1203.40 512.90 C1209.30 514.57 1211.75 515.73 1220.10 516.60 C1228.45 517.47 1245.50 516.98 1253.50 518.10 C1261.50 519.22 1263.58 520.70 1268.10 523.30 C1272.62 525.90 1276.43 530.23 1280.60 533.70 C1284.77 537.17 1288.58 541.57 1293.10 544.10 C1297.62 546.63 1302.77 547.95 1307.70 548.90 C1312.63 549.85 1320.20 549.65 1322.70 549.80 L1322.7 549.8 L327.9 549.8 Z" fill="url(#mg)"/><rect x="328" y="335.5" width="995" height="1" fill="#e8e8e8" fill-opacity="0.85"/><rect x="328" y="388.7" width="995" height="1" fill="#e8e8e8" fill-opacity="0.85"/><rect x="328" y="442.4" width="995" height="1" fill="#e8e8e8" fill-opacity="0.85"/><rect x="328" y="495.7" width="995" height="1" fill="#e8e8e8" fill-opacity="0.85"/><rect x="328" y="549.3" width="995" height="1" fill="#e8e8e8" fill-opacity="0.85"/><path d="M327.90 549.80 C344.65 549.80 408.87 550.15 428.40 549.80 C447.93 549.45 438.83 548.47 445.10 547.70 C451.37 546.93 455.57 545.80 466.00 545.20 C476.43 544.60 497.28 544.63 507.70 544.10 C518.12 543.57 521.55 542.68 528.50 542.00 C535.45 541.32 540.82 540.33 549.40 540.00 C557.98 539.67 558.63 540.02 580.00 540.00 C601.37 539.98 653.65 539.67 677.60 539.90 C701.55 540.13 709.88 541.20 723.70 541.40 C737.52 541.60 752.32 541.48 760.50 541.10 C768.68 540.72 768.18 540.20 772.80 539.10 C777.42 538.00 782.05 535.73 788.20 534.50 C794.35 533.27 802.73 532.22 809.70 531.70 C816.67 531.18 821.33 531.77 830.00 531.40 C838.67 531.03 848.77 529.98 861.70 529.50 C874.63 529.02 895.43 528.83 907.60 528.50 C919.77 528.17 926.72 528.13 934.70 527.50 C942.68 526.87 946.82 525.33 955.50 524.70 C964.18 524.07 976.37 523.77 986.80 523.70 C997.23 523.63 1007.67 523.92 1018.10 524.30 C1028.53 524.68 1037.97 525.93 1049.40 526.00 C1060.83 526.07 1077.70 526.37 1086.70 524.70 C1095.70 523.03 1097.85 519.72 1103.40 516.00 C1108.95 512.28 1114.45 505.95 1120.00 502.40 C1125.55 498.85 1130.43 496.33 1136.70 494.70 C1142.97 493.07 1151.33 492.70 1157.60 492.60 C1163.87 492.50 1168.75 492.63 1174.30 494.10 C1179.85 495.57 1185.35 498.45 1190.90 501.40 C1196.45 504.35 1202.03 509.20 1207.60 511.80 C1213.17 514.40 1217.70 515.95 1224.30 517.00 C1230.90 518.05 1238.17 517.92 1247.20 518.10 C1256.23 518.28 1265.92 518.10 1278.50 518.10 C1291.08 518.10 1315.33 518.10 1322.70 518.10" stroke="#a3b3bb" stroke-width="1.9" fill="none" stroke-dasharray="1.9 2.2"/><path d="M327.90 451.80 C330.07 452.00 336.32 451.87 340.90 453.00 C345.48 454.13 350.88 455.40 355.40 458.60 C359.92 461.80 363.47 467.75 368.00 472.20 C372.53 476.65 377.75 482.25 382.60 485.30 C387.45 488.35 392.25 489.38 397.10 490.50 C401.95 491.62 406.48 492.00 411.70 492.00 C416.92 492.00 422.83 491.78 428.40 490.50 C433.97 489.22 439.53 487.00 445.10 484.30 C450.67 481.60 456.58 476.73 461.80 474.30 C467.02 471.87 471.18 470.68 476.40 469.70 C481.62 468.72 487.88 468.27 493.10 468.40 C498.32 468.53 503.18 469.00 507.70 470.50 C512.22 472.00 516.38 474.52 520.20 477.40 C524.02 480.28 527.13 483.10 530.60 487.80 C534.07 492.50 537.53 500.48 541.00 505.60 C544.47 510.72 547.57 515.38 551.40 518.50 C555.23 521.62 558.85 523.05 564.00 524.30 C569.15 525.55 576.18 525.88 582.30 526.00 C588.42 526.12 593.27 525.82 600.70 525.00 C608.13 524.18 619.22 522.00 626.90 521.10 C634.58 520.20 640.15 520.00 646.80 519.60 C653.45 519.20 661.17 519.93 666.80 518.70 C672.43 517.47 676.25 515.58 680.60 512.20 C684.95 508.82 688.80 503.90 692.90 498.40 C697.00 492.90 701.35 485.10 705.20 479.20 C709.05 473.30 712.42 467.10 716.00 463.00 C719.58 458.90 722.35 456.57 726.70 454.60 C731.05 452.63 736.97 451.33 742.10 451.20 C747.23 451.07 752.38 451.83 757.50 453.80 C762.62 455.77 767.68 458.13 772.80 463.00 C777.92 467.87 783.58 477.37 788.20 483.00 C792.82 488.63 795.88 493.67 800.50 496.80 C805.12 499.93 809.87 500.87 815.90 501.80 C821.93 502.73 830.45 501.60 836.70 502.40 C842.95 503.20 847.50 504.33 853.40 506.60 C859.30 508.87 866.20 513.50 872.10 516.00 C878.00 518.50 882.88 520.38 888.80 521.60 C894.72 522.82 901.68 523.53 907.60 523.30 C913.52 523.07 919.43 522.12 924.30 520.20 C929.17 518.28 932.98 515.98 936.80 511.80 C940.62 507.62 943.73 500.67 947.20 495.10 C950.67 489.53 953.78 483.43 957.60 478.40 C961.42 473.37 965.58 468.02 970.10 464.90 C974.62 461.78 979.83 460.75 984.70 459.70 C989.57 458.65 994.78 459.65 999.30 458.60 C1003.82 457.55 1007.97 456.00 1011.80 453.40 C1015.63 450.80 1018.82 447.87 1022.30 443.00 C1025.78 438.13 1028.88 431.15 1032.70 424.20 C1036.52 417.25 1041.03 407.20 1045.20 401.30 C1049.37 395.40 1053.53 391.48 1057.70 388.80 C1061.87 386.12 1066.42 385.73 1070.20 385.20 C1073.98 384.67 1076.62 384.48 1080.40 385.60 C1084.18 386.72 1089.07 388.58 1092.90 391.90 C1096.73 395.22 1100.27 399.77 1103.40 405.50 C1106.53 411.23 1108.93 417.62 1111.70 426.30 C1114.47 434.98 1117.22 448.57 1120.00 457.60 C1122.78 466.63 1125.62 474.25 1128.40 480.50 C1131.18 486.75 1133.23 491.35 1136.70 495.10 C1140.17 498.85 1144.33 501.53 1149.20 503.00 C1154.07 504.47 1159.98 503.30 1165.90 503.90 C1171.82 504.50 1178.45 505.10 1184.70 506.60 C1190.95 508.10 1197.50 511.23 1203.40 512.90 C1209.30 514.57 1211.75 515.73 1220.10 516.60 C1228.45 517.47 1245.50 516.98 1253.50 518.10 C1261.50 519.22 1263.58 520.70 1268.10 523.30 C1272.62 525.90 1276.43 530.23 1280.60 533.70 C1284.77 537.17 1288.58 541.57 1293.10 544.10 C1297.62 546.63 1302.77 547.95 1307.70 548.90 C1312.63 549.85 1320.20 549.65 1322.70 549.80" stroke="#4a93c0" stroke-width="2" fill="none"/></svg>
<div class="a" style="left:623px;top:607.2px;width:12.5px;height:2px;background:#4a93c0;border-radius:1px"></div>
<div class="t " style="left:641.80px;top:602.24px;font-size:12px;color:#616161;letter-spacing:-0.3px">May 13, 2024–May 12, 2025</div>
<svg class="a" style="left:802.5px;top:604px" width="16" height="8"><path d="M1 4 H13" stroke="#9db3bf" stroke-width="1.9" fill="none" stroke-dasharray="1.9 2.3"/></svg>
<div class="t " style="left:822.70px;top:602.24px;font-size:12px;color:#616161;letter-spacing:-0.3px">May 14, 2023–May 12, 2024</div>
<div class="card" style="left:1358.5px;top:246.1px;width:535.9px;height:390.3px"></div>
<div class="t sb" style="left:1375.50px;top:265.70px;font-size:13px;color:#303030">Total sales breakdown</div>
<div class="a" style="left:1375.5px;top:280px;width:140.1px;height:2px;background:linear-gradient(90deg,#bdbdbd 2px,transparent 2px) 0 0/4px 2px repeat-x"></div>
<div class="a" style="left:1375px;top:291.80px;width:502px;height:37px;background:#f7f7f7;border-radius:8px"></div>
<div class="t " style="left:1387.40px;top:303.90px;font-size:13px;color:#4a5796;letter-spacing:0.2px">Gross sales</div>
<div class="t " style="left:1759.14px;top:303.90px;font-size:13px;color:#303030">$7,620.17</div>
<svg class="a" style="left:1824.30px;top:305.90px" width="10" height="10" viewBox="0 0 10 10"><path d="M2.6 7.4 L7 3 M3.6 2.9 H7.1 V6.4" stroke="#29845a" stroke-width="1.5" fill="none" stroke-linecap="round" stroke-linejoin="round"/></svg>
<div class="t b" style="left:1835.80px;top:305.57px;font-size:11.5px;color:#29845a">231%</div>
<div class="a" style="left:1375px;top:333.35px;width:502px;height:37px;background:#f7f7f7;border-radius:8px"></div>
<div class="t " style="left:1387.40px;top:345.45px;font-size:13px;color:#4a5796;letter-spacing:0.2px">Discounts</div>
<div class="t " style="left:1772.89px;top:345.45px;font-size:13px;color:#303030">-$65.29</div>
<svg class="a" style="left:1830.70px;top:347.45px" width="10" height="10" viewBox="0 0 10 10"><path d="M2.6 2.6 L7 7 M3.6 7.1 H7.1 V3.6" stroke="#4a4a4a" stroke-width="1.5" fill="none" stroke-linecap="round" stroke-linejoin="round"/></svg>
<div class="t b" style="left:1842.20px;top:347.12px;font-size:11.5px;color:#4a4a4a">6%</div>
<div class="a" style="left:1375px;top:374.90px;width:502px;height:37px;background:#f7f7f7;border-radius:8px"></div>
<div class="t " style="left:1387.40px;top:387.00px;font-size:13px;color:#4a5796;letter-spacing:0.2px">Returns</div>
<div class="t " style="left:1765.66px;top:387.00px;font-size:13px;color:#303030">-$138.97</div>
<svg class="a" style="left:1824.30px;top:389.00px" width="10" height="10" viewBox="0 0 10 10"><path d="M2.6 7.4 L7 3 M3.6 2.9 H7.1 V6.4" stroke="#616161" stroke-width="1.5" fill="none" stroke-linecap="round" stroke-linejoin="round"/></svg>
<div class="t b" style="left:1835.80px;top:388.67px;font-size:11.5px;color:#616161">155%</div>
<div class="a" style="left:1375px;top:416.45px;width:502px;height:37px;background:#f7f7f7;border-radius:8px"></div>
<div class="t " style="left:1387.40px;top:428.55px;font-size:13px;color:#4a5796;letter-spacing:0.2px">Net sales</div>
<div class="t " style="left:1759.14px;top:428.55px;font-size:13px;color:#303030">$7,415.91</div>
<svg class="a" style="left:1824.30px;top:430.55px" width="10" height="10" viewBox="0 0 10 10"><path d="M2.6 7.4 L7 3 M3.6 2.9 H7.1 V6.4" stroke="#29845a" stroke-width="1.5" fill="none" stroke-linecap="round" stroke-linejoin="round"/></svg>
<div class="t b" style="left:1835.80px;top:430.22px;font-size:11.5px;color:#29845a">239%</div>
<div class="a" style="left:1375px;top:458.00px;width:502px;height:37px;background:#f7f7f7;border-radius:8px"></div>
<div class="t " style="left:1387.40px;top:470.10px;font-size:13px;color:#4a5796;letter-spacing:0.2px">Shipping charges</div>
<div class="t " style="left:1777.22px;top:470.10px;font-size:13px;color:#303030">$44.77</div>
<svg class="a" style="left:1827.50px;top:472.10px" width="10" height="10" viewBox="0 0 10 10"><path d="M2.6 2.6 L7 7 M3.6 7.1 H7.1 V3.6" stroke="#4a4a4a" stroke-width="1.5" fill="none" stroke-linecap="round" stroke-linejoin="round"/></svg>
<div class="t b" style="left:1839.00px;top:471.77px;font-size:11.5px;color:#4a4a4a">40%</div>
<div class="a" style="left:1375px;top:499.55px;width:502px;height:37px;background:#f7f7f7;border-radius:8px"></div>
<div class="t " style="left:1387.40px;top:511.65px;font-size:13px;color:#4a5796;letter-spacing:0.2px">Return fees</div>
<div class="t " style="left:1784.45px;top:511.65px;font-size:13px;color:#303030">$0.00</div>
<div class="a" style="left:1841px;top:517.5px;width:11px;height:1.3px;background:#8a8a8a"></div>
<div class="a" style="left:1375px;top:541.10px;width:502px;height:37px;background:#f7f7f7;border-radius:8px"></div>
<div class="t " style="left:1387.40px;top:553.20px;font-size:13px;color:#4a5796;letter-spacing:0.2px">Taxes</div>
<div class="t " style="left:1784.45px;top:553.20px;font-size:13px;color:#303030">$7.88</div>
<svg class="a" style="left:1830.70px;top:555.20px" width="10" height="10" viewBox="0 0 10 10"><path d="M2.6 7.4 L7 3 M3.6 2.9 H7.1 V6.4" stroke="#616161" stroke-width="1.5" fill="none" stroke-linecap="round" stroke-linejoin="round"/></svg>
<div class="t b" style="left:1842.20px;top:554.87px;font-size:11.5px;color:#616161">9%</div>
<div class="a" style="left:1375px;top:582.65px;width:502px;height:37px;background:#f7f7f7;border-radius:8px"></div>
<div class="t " style="left:1387.40px;top:594.75px;font-size:13px;color:#4a5796;letter-spacing:0.2px">Total sales</div>
<div class="t " style="left:1759.14px;top:594.75px;font-size:13px;color:#303030">$7,468.56</div>
<svg class="a" style="left:1824.30px;top:596.75px" width="10" height="10" viewBox="0 0 10 10"><path d="M2.6 7.4 L7 3 M3.6 2.9 H7.1 V6.4" stroke="#29845a" stroke-width="1.5" fill="none" stroke-linecap="round" stroke-linejoin="round"/></svg>
<div class="t b" style="left:1835.80px;top:596.42px;font-size:11.5px;color:#29845a">229%</div>
<div class="card" style="left:255.4px;top:651.2px;width:536px;height:255.3px"></div>
<div class="card" style="left:806.6px;top:651.2px;width:536.8px;height:255.3px"></div>
<div class="card" style="left:1358.5px;top:651.2px;width:535.9px;height:255.3px"></div>
<div class="t sb" style="left:272.30px;top:670.70px;font-size:13px;color:#303030">Total sales by sales channel</div>
<div class="a" style="left:272.3px;top:685px;width:177.0px;height:2px;background:linear-gradient(90deg,#bdbdbd 2px,transparent 2px) 0 0/4px 2px repeat-x"></div>
<div class="t sb" style="left:823.30px;top:670.70px;font-size:13px;color:#303030">Average order value over time</div>
<div class="a" style="left:823.3px;top:685px;width:189.5px;height:2px;background:linear-gradient(90deg,#bdbdbd 2px,transparent 2px) 0 0/4px 2px repeat-x"></div>
<div class="t sb" style="left:1375.50px;top:670.70px;font-size:13px;color:#303030">Total sales by product</div>
<div class="a" style="left:1375.5px;top:685px;width:137.7px;height:2px;background:linear-gradient(90deg,#bdbdbd 2px,transparent 2px) 0 0/4px 2px repeat-x"></div>
<svg class="a" style="left:0;top:0;overflow:visible" width="1" height="1"><circle cx="413.6" cy="792.6" r="79" stroke="#35a7ea" stroke-width="17.4" fill="none"/></svg>
<div class="t" style="left:353.6px;width:120px;text-align:center;top:774.59px;font-size:20.8px;color:#303030;letter-spacing:-0.6px;-webkit-text-stroke:0.4px #303030">$7.5K</div>
<svg class="a" style="left:391.00px;top:801.00px" width="10" height="10" viewBox="0 0 10 10"><path d="M2.6 7.4 L7 3 M3.6 2.9 H7.1 V6.4" stroke="#29845a" stroke-width="1.5" fill="none" stroke-linecap="round" stroke-linejoin="round"/></svg>
<div class="t b" style="left:403.00px;top:800.41px;font-size:11.8px;color:#29845a">229%</div>
<div class="a" style="left:532px;top:787px;width:12px;height:12px;background:#35a7ea;border-radius:2px"></div>
<div class="t " style="left:547.50px;top:787.22px;font-size:12.5px;color:#616161">Online Store</div>
<div class="t " style="left:652.50px;top:787.22px;font-size:12.5px;color:#616161;letter-spacing:-0.2px">$7.5K</div>
<svg class="a" style="left:687.00px;top:788.00px" width="10" height="10" viewBox="0 0 10 10"><path d="M2.6 7.4 L7 3 M3.6 2.9 H7.1 V6.4" stroke="#29845a" stroke-width="1.5" fill="none" stroke-linecap="round" stroke-linejoin="round"/></svg>
<div class="t b" style="left:697.00px;top:787.71px;font-size:10.5px;color:#29845a">229%</div>
<div class="a" style="left:876.7px;top:740.5px;width:445.3px;height:1px;background:#ebebeb"></div>
<div class="t " style="left:825.00px;top:735.17px;font-size:11.5px;color:#616161;letter-spacing:0px">$500</div>
<div class="a" style="left:876.7px;top:818.9px;width:445.3px;height:1px;background:#ebebeb"></div>
<div class="t " style="left:825.00px;top:813.57px;font-size:11.5px;color:#616161;letter-spacing:0px">$0</div>
<div class="t" style="left:836.7px;width:80px;text-align:center;top:835.11px;font-size:11.8px;color:#616161">May 2024</div>
<div class="t" style="left:911.0px;width:80px;text-align:center;top:835.11px;font-size:11.8px;color:#616161">Jul 2024</div>
<div class="t" style="left:985.3px;width:80px;text-align:center;top:835.11px;font-size:11.8px;color:#616161">Sep 2024</div>
<div class="t" style="left:1059.6px;width:80px;text-align:center;top:835.11px;font-size:11.8px;color:#616161">Nov 2024</div>
<div class="t" style="left:1133.9px;width:80px;text-align:center;top:835.11px;font-size:11.8px;color:#616161">Jan 2025</div>
<div class="t" style="left:1208.2px;width:80px;text-align:center;top:835.11px;font-size:11.8px;color:#616161">Mar 2025</div>
<svg class="a" style="left:0;top:0;overflow:visible" width="1" height="1"><defs><linearGradient id="ag" x1="0" y1="779" x2="0" y2="820" gradientUnits="userSpaceOnUse"><stop offset="0" stop-color="#f1f8fc"/><stop offset="1" stop-color="#fdfeff"/></linearGradient></defs><path d="M877.00 807.90 C878.88 808.08 884.30 808.35 888.30 809.00 C892.30 809.65 896.55 811.17 901.00 811.80 C905.45 812.43 910.32 813.03 915.00 812.80 C919.68 812.57 923.47 811.27 929.10 810.40 C934.73 809.53 942.23 807.95 948.80 807.60 C955.37 807.25 961.70 808.00 968.50 808.30 C975.30 808.60 981.40 809.35 989.60 809.40 C997.80 809.45 1009.50 808.67 1017.70 808.60 C1025.90 808.53 1029.88 808.77 1038.80 809.00 C1047.72 809.23 1062.98 809.47 1071.20 810.00 C1079.42 810.53 1082.93 811.73 1088.10 812.20 C1093.27 812.67 1096.33 812.80 1102.20 812.80 C1108.07 812.80 1116.93 812.35 1123.30 812.20 C1129.67 812.05 1136.15 812.38 1140.40 811.90 C1144.65 811.42 1145.85 810.95 1148.80 809.30 C1151.75 807.65 1154.98 803.82 1158.10 802.00 C1161.22 800.18 1164.37 799.18 1167.50 798.40 C1170.63 797.62 1174.12 797.83 1176.90 797.30 C1179.68 796.77 1181.60 796.93 1184.20 795.20 C1186.80 793.47 1189.72 789.33 1192.50 786.90 C1195.28 784.47 1198.12 781.90 1200.90 780.60 C1203.68 779.30 1206.43 779.18 1209.20 779.10 C1211.97 779.02 1215.07 779.15 1217.50 780.10 C1219.93 781.05 1221.88 782.63 1223.80 784.80 C1225.72 786.97 1227.27 789.97 1229.00 793.10 C1230.73 796.23 1232.28 800.90 1234.20 803.60 C1236.12 806.30 1238.23 808.08 1240.50 809.30 C1242.77 810.52 1243.63 810.63 1247.80 810.90 C1251.97 811.17 1258.03 810.85 1265.50 810.90 C1272.97 810.95 1287.05 810.87 1292.60 811.20 C1298.15 811.53 1296.37 811.83 1298.80 812.90 C1301.23 813.97 1304.42 816.47 1307.20 817.60 C1309.98 818.73 1313.03 819.32 1315.50 819.70 C1317.97 820.08 1320.92 819.87 1322.00 819.90 L1322 819.4 L876.7 819.4 Z" fill="url(#ag)"/><rect x="876.7" y="740.5" width="445.3" height="1" fill="#e8e8e8" fill-opacity="0.85"/><rect x="876.7" y="818.9" width="445.3" height="1" fill="#e8e8e8" fill-opacity="0.85"/><path d="M950.20 813.20 C972.00 813.32 1054.50 814.02 1081.00 813.90 C1107.50 813.78 1101.03 813.15 1109.20 812.50 C1117.37 811.85 1123.58 810.53 1130.00 810.00 C1136.42 809.47 1143.18 810.28 1147.70 809.30 C1152.22 808.32 1153.97 805.37 1157.10 804.10 C1160.23 802.83 1162.85 802.05 1166.50 801.70 C1170.15 801.35 1175.35 801.52 1179.00 802.00 C1182.65 802.48 1185.28 803.38 1188.40 804.60 C1191.52 805.82 1194.23 808.25 1197.70 809.30 C1201.17 810.35 1204.85 810.63 1209.20 810.90 C1213.55 811.17 1218.77 811.25 1223.80 810.90 C1228.83 810.55 1231.58 809.23 1239.40 808.80 C1247.22 808.37 1261.83 808.33 1270.70 808.30 C1279.57 808.27 1286.87 808.27 1292.60 808.60 C1298.33 808.93 1300.42 809.72 1305.10 810.30 C1309.78 810.88 1318.10 811.80 1320.70 812.10" stroke="#a3b3bb" stroke-width="1.9" fill="none" stroke-dasharray="1.9 2.2"/><path d="M877.00 807.90 C878.88 808.08 884.30 808.35 888.30 809.00 C892.30 809.65 896.55 811.17 901.00 811.80 C905.45 812.43 910.32 813.03 915.00 812.80 C919.68 812.57 923.47 811.27 929.10 810.40 C934.73 809.53 942.23 807.95 948.80 807.60 C955.37 807.25 961.70 808.00 968.50 808.30 C975.30 808.60 981.40 809.35 989.60 809.40 C997.80 809.45 1009.50 808.67 1017.70 808.60 C1025.90 808.53 1029.88 808.77 1038.80 809.00 C1047.72 809.23 1062.98 809.47 1071.20 810.00 C1079.42 810.53 1082.93 811.73 1088.10 812.20 C1093.27 812.67 1096.33 812.80 1102.20 812.80 C1108.07 812.80 1116.93 812.35 1123.30 812.20 C1129.67 812.05 1136.15 812.38 1140.40 811.90 C1144.65 811.42 1145.85 810.95 1148.80 809.30 C1151.75 807.65 1154.98 803.82 1158.10 802.00 C1161.22 800.18 1164.37 799.18 1167.50 798.40 C1170.63 797.62 1174.12 797.83 1176.90 797.30 C1179.68 796.77 1181.60 796.93 1184.20 795.20 C1186.80 793.47 1189.72 789.33 1192.50 786.90 C1195.28 784.47 1198.12 781.90 1200.90 780.60 C1203.68 779.30 1206.43 779.18 1209.20 779.10 C1211.97 779.02 1215.07 779.15 1217.50 780.10 C1219.93 781.05 1221.88 782.63 1223.80 784.80 C1225.72 786.97 1227.27 789.97 1229.00 793.10 C1230.73 796.23 1232.28 800.90 1234.20 803.60 C1236.12 806.30 1238.23 808.08 1240.50 809.30 C1242.77 810.52 1243.63 810.63 1247.80 810.90 C1251.97 811.17 1258.03 810.85 1265.50 810.90 C1272.97 810.95 1287.05 810.87 1292.60 811.20 C1298.15 811.53 1296.37 811.83 1298.80 812.90 C1301.23 813.97 1304.42 816.47 1307.20 817.60 C1309.98 818.73 1313.03 819.32 1315.50 819.70 C1317.97 820.08 1320.92 819.87 1322.00 819.90" stroke="#4a93c0" stroke-width="2" fill="none"/></svg>
<div class="t sb" style="left:823.30px;top:670.70px;font-size:13px;color:#303030">Average order value over time</div>
<div class="a" style="left:823.3px;top:685px;width:189.5px;height:2px;background:linear-gradient(90deg,#bdbdbd 2px,transparent 2px) 0 0/4px 2px repeat-x"></div>
<div class="t " style="left:823.30px;top:697.02px;font-size:21px;color:#303030;letter-spacing:-0.05px;-webkit-text-stroke:0.45px #303030">$77.89</div>
<svg class="a" style="left:892.00px;top:704.00px" width="10" height="10" viewBox="0 0 10 10"><path d="M2.6 7.4 L7 3 M3.6 2.9 H7.1 V6.4" stroke="#29845a" stroke-width="1.5" fill="none" stroke-linecap="round" stroke-linejoin="round"/></svg>
<div class="t b" style="left:903.50px;top:702.91px;font-size:11.8px;color:#29845a">35%</div>
<div class="t " style="left:272.30px;top:714.72px;font-size:0.1px;"></div>
<div class="a" style="left:898px;top:877px;width:12.5px;height:2px;background:#4a93c0;border-radius:1px"></div>
<div class="t " style="left:916.50px;top:872.14px;font-size:12px;color:#616161;letter-spacing:-0.3px">May 13, 2024–May 12, 2025</div>
<svg class="a" style="left:1078.5px;top:874px" width="16" height="8"><path d="M1 4 H13" stroke="#9db3bf" stroke-width="1.9" fill="none" stroke-dasharray="1.9 2.3"/></svg>
<div class="t " style="left:1097.50px;top:872.14px;font-size:12px;color:#616161;letter-spacing:-0.3px">May 14, 2023–May 12, 2024</div>
<div class="t " style="left:1375.00px;top:701.07px;font-size:11.5px;color:#616161;letter-spacing:-0.1px;font-size:11.8px">Adjustable Double Bubble Door Sweep · KS Hardware · Door Hardware</div>
<div class="a" style="left:1375px;top:716.2px;width:377.4px;height:32.7px;background:#35a7ea;border-radius:0 4px 4px 0"></div>
<div class="t " style="left:1763.40px;top:727.14px;font-size:12px;color:#616161">$5,439.03</div>
<svg class="a" style="left:1826.00px;top:727.80px" width="10" height="10" viewBox="0 0 10 10"><path d="M2.6 7.4 L7 3 M3.6 2.9 H7.1 V6.4" stroke="#29845a" stroke-width="1.5" fill="none" stroke-linecap="round" stroke-linejoin="round"/></svg>
<div class="t b" style="left:1837.50px;top:726.84px;font-size:12px;color:#29845a">269%</div>
<div class="a" style="left:1375px;top:751.9px;width:102px;height:32.7px;background:#98caea;border-radius:0 4px 4px 0"></div>
<div class="t " style="left:1487.80px;top:762.14px;font-size:12px;color:#616161">$1,474.60</div>
<div class="t " style="left:1375.00px;top:806.07px;font-size:11.5px;color:#616161;letter-spacing:-0.05px">Door Hinge Shims - 10 Pack · KS Hardware · None</div>
<div class="a" style="left:1375px;top:821px;width:48.2px;height:33px;background:#35a7ea;border-radius:0 4px 4px 0"></div>
<div class="t " style="left:1433.50px;top:832.14px;font-size:12px;color:#616161">$698.53</div>
<div class="a" style="left:1489px;top:837.5px;width:11.5px;height:1.3px;background:#616161"></div>
<div class="a" style="left:1375px;top:856px;width:1px;height:33px;background:#e8e8e8"></div>
<div class="t " style="left:1386.50px;top:867.14px;font-size:12px;color:#616161">$0.00</div>
<!--/C-->
</body></html>
